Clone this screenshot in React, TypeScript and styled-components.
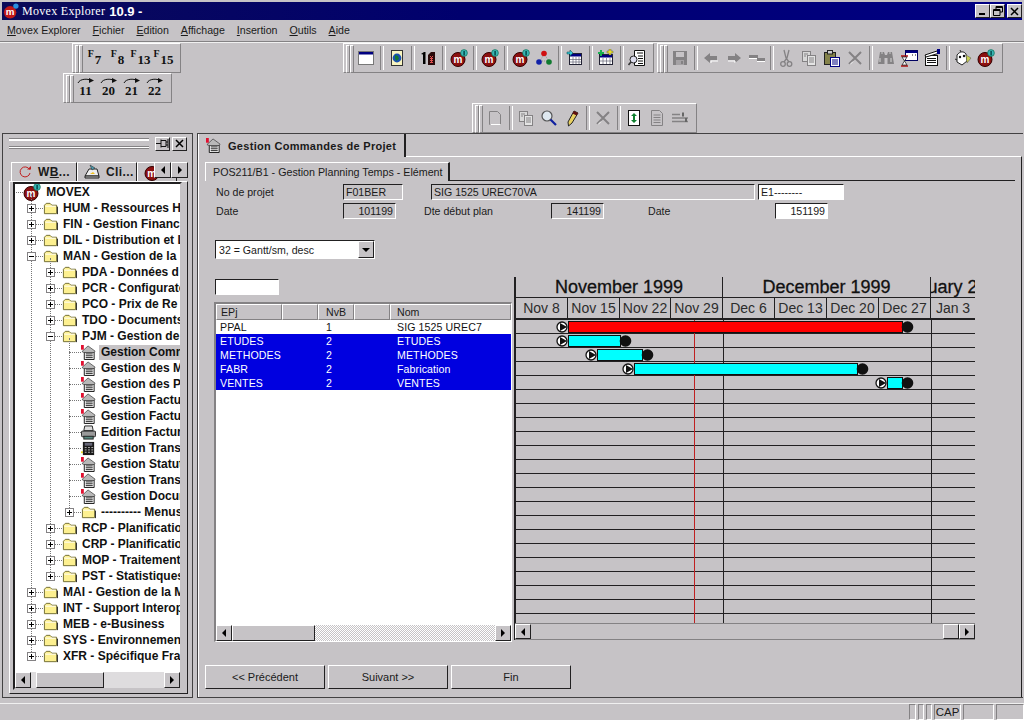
import React from 'react';
import styled, { createGlobalStyle } from 'styled-components';

const FACE = '#c6c3c6';
const SHADOW = '#848284';
const DARK = '#212021';

const GlobalStyle = createGlobalStyle`
    html, body { margin: 0; padding: 0; background: ${FACE}; }
    * { box-sizing: border-box; }
    body { font-family: "Liberation Sans", Arial, sans-serif; font-size: 11px; color: #1a1a1a; }
`;

const Screen = styled.div`
    width: 1024px;
    height: 720px;
    overflow: hidden;
    background: ${FACE};
    padding-top: 2px;
    display: flex;
    flex-direction: column;
`;

/* ---------- title and menu ---------- */

const TitleBar = styled.div`
    height: 18px;
    margin: 0 2px;
    padding-left: 1px;
    display: flex;
    align-items: center;
    background: linear-gradient(90deg, #0a0a58 0%, #00006e 45%, #000084 100%);
    color: #fff;
`;
const TitleName = styled.span`
    font-family: "Liberation Serif", serif;
    font-size: 12px;
    letter-spacing: 0.3px;
    margin-left: 3px;
`;
const TitleVersion = styled.span`
    font-size: 13px;
    font-weight: 700;
    margin-left: 4px;
`;
const WindowButtons = styled.div`
    margin-left: auto;
    display: flex;
    padding-right: 0;
`;
const WindowButton = styled.div<{ $gap?: number }>`
    width: 15px;
    height: 14px;
    margin-left: ${(p) => p.$gap ?? 0}px;
    background: ${FACE};
    border: 1px solid;
    border-color: #fff ${DARK} ${DARK} #fff;
    display: flex;
    align-items: center;
    justify-content: center;
`;
const MenuBar = styled.div`
    height: 22px;
    display: flex;
    align-items: center;
    padding: 0 0 2px 7px;
    gap: 12px;
    font-size: 10.6px;
    border-bottom: 1px solid ${SHADOW};
    u { text-decoration: underline; }
`;

/* ---------- toolbars ---------- */

const Dock = styled.div`
    height: 91px;
    border-top: 1px solid #f0f0f0;
    display: flex;
    flex-direction: column;
`;
const DockRow = styled.div<{ $height: number }>`
    height: ${(p) => p.$height}px;
    display: flex;
`;
const Toolbar = styled.div<{ $left: number }>`
    margin-left: ${(p) => p.$left}px;
    height: 30px;
    display: flex;
    align-items: center;
    padding: 0 5px 0 2px;
    border: 1px solid;
    border-color: #fff ${SHADOW} ${SHADOW} #fff;
`;
const Grip = styled.div`
    width: 8px;
    height: 26px;
    flex: none;
    display: flex;
    &::before, &::after {
        content: '';
        width: 3px;
        height: 100%;
        background: ${FACE};
        border: 1px solid;
        border-color: #fff ${SHADOW} ${SHADOW} #fff;
    }
`;
const Cell = styled.div`
    width: 23px;
    height: 24px;
    flex: none;
    display: flex;
    align-items: center;
    justify-content: center;
`;
const Sep = styled.div<{ $w?: number }>`
    width: ${(p) => p.$w ?? 8}px;
    height: 24px;
    flex: none;
    display: flex;
    justify-content: center;
    padding-left: 2px;
    &::before {
        content: '';
        width: 2px;
        height: 100%;
        border-left: 1px solid ${SHADOW};
        border-right: 1px solid #fff;
    }
`;
const FKey = styled.div`
    width: 23px;
    height: 20px;
    flex: none;
    display: flex;
    justify-content: center;
    font-family: "Liberation Serif", serif;
    font-weight: 700;
    color: #111;
`;
const FLetter = styled.span`
    font-size: 10px;
    line-height: 11px;
`;
const FNumber = styled.span`
    font-size: 13px;
    line-height: 14px;
    margin-top: 5px;
    margin-left: 1px;
`;
const JumpKey = styled.div`
    width: 23px;
    height: 22px;
    flex: none;
    display: flex;
    flex-direction: column;
    align-items: center;
    font-family: "Liberation Serif", serif;
    font-weight: 700;
    font-size: 13px;
    line-height: 13px;
    color: #111;
`;

/* ---------- workspace ---------- */

const Main = styled.div`
    flex: 1;
    display: flex;
    padding-left: 2px;
`;
const LeftPanel = styled.div`
    width: 191px;
    height: 565px;
    border: 1px solid #424142;
    display: flex;
    flex-direction: column;
    padding: 2px 4px 0 6px;
`;
const PanelHead = styled.div`
    height: 15px;
    display: flex;
    align-items: center;
`;
const PanelGrip = styled.div`
    width: 140px;
    height: 11px;
    border-top: 1px solid ${SHADOW};
    border-bottom: 1px solid ${SHADOW};
    background: linear-gradient(#fff 0 2px, ${FACE} 2px 7px, ${SHADOW} 7px 8px, #fff 8px);
`;
const SmallButton = styled.div<{ $left?: number; $h?: number }>`
    width: ${(p) => (p.$h ? 17 : 15)}px;
    height: ${(p) => p.$h ?? 14}px;
    margin-left: ${(p) => p.$left ?? 0}px;
    flex: none;
    background: ${FACE};
    border: 1px solid;
    border-color: #fff ${DARK} ${DARK} #fff;
    display: flex;
    align-items: center;
    justify-content: center;
`;
const TabStrip = styled.div`
    position: relative;
    height: 20px;
    margin-top: 10px;
    padding-left: 2px;
    display: flex;
    align-items: flex-end;
    overflow: hidden;
`;
const SideTab = styled.div<{ $w: number }>`
    width: ${(p) => p.$w}px;
    height: 19px;
    flex: none;
    display: flex;
    align-items: center;
    gap: 6px;
    padding-left: 6px;
    font-size: 12px;
    font-weight: 700;
    letter-spacing: 0.4px;
    white-space: nowrap;
    overflow: hidden;
    border: 1px solid;
    border-bottom: none;
    border-color: #fff ${DARK} transparent #fff;
`;
const TabArrows = styled.div`
    position: absolute;
    right: 0;
    top: 1px;
    display: flex;
`;
const SidePage = styled.div`
    width: 179px;
    height: 513px;
    border: 1px solid;
    border-color: #fff ${DARK} ${DARK} #fff;
    padding: 0 5px 0 3px;
    display: flex;
`;
const TreeBox = styled.div`
    width: 169px;
    height: 508px;
    display: flex;
    flex-direction: column;
    background: #fff;
    border: 2px solid;
    border-color: ${DARK} ${FACE} ${FACE} ${DARK};
`;
const TreeScroll = styled.div`
    flex: 1;
    overflow: hidden;
`;
const Row = styled.div`
    height: 16px;
    display: flex;
    align-items: center;
    white-space: nowrap;
    font-size: 12px;
    font-weight: 700;
    color: #111;
`;
const RootRow = styled(Row)`
    padding-left: 1px;
`;
const Group = styled.div<{ $left: number }>`
    position: relative;
    margin-left: ${(p) => p.$left}px;
    &::before {
        content: '';
        position: absolute;
        left: 0;
        top: -6px;
        bottom: 8px;
        border-left: 1px dotted #777;
    }
`;
const Expander = styled.div`
    position: relative;
    width: 9px;
    height: 9px;
    flex: none;
    margin-left: -4px;
    background: #fff;
    border: 1px solid ${SHADOW};
    &::before {
        content: '';
        position: absolute;
        left: 1px;
        top: 3px;
        width: 5px;
        height: 1px;
        background: #000;
    }
`;
const Plus = styled(Expander)`
    &::after {
        content: '';
        position: absolute;
        left: 3px;
        top: 1px;
        width: 1px;
        height: 5px;
        background: #000;
    }
`;
const Connector = styled.div<{ $w: number }>`
    width: ${(p) => p.$w}px;
    flex: none;
    border-top: 1px dotted #777;
`;
const RowIcon = styled.div`
    width: 15px;
    height: 15px;
    flex: none;
    margin-right: 3px;
    display: flex;
    align-items: center;
`;
const RowLabel = styled.span<{ $selected?: boolean }>`
    flex: 1;
    min-width: 0;
    overflow: hidden;
    padding: 0 2px;
    height: 15px;
    line-height: 15px;
    background: ${(p) => (p.$selected ? FACE : 'transparent')};
`;

const ScrollBar = styled.div<{ $track?: string }>`
    height: 16px;
    flex: none;
    display: flex;
    align-items: stretch;
    background: ${(p) => p.$track ?? FACE};
`;
const DitherTrack = 'repeating-conic-gradient(#fff 0 25%, #c6c3c6 0 50%) 0 0 / 2px 2px';
const ScrollButton = styled.div<{ $w?: number }>`
    width: ${(p) => p.$w ?? 16}px;
    flex: none;
    background: ${FACE};
    border: 1px solid;
    border-color: #fff ${DARK} ${DARK} #fff;
    display: flex;
    align-items: center;
    justify-content: center;
`;
const ScrollThumb = styled.div<{ $w: number; $left?: number }>`
    width: ${(p) => p.$w}px;
    margin-left: ${(p) => p.$left ?? 0}px;
    flex: none;
    background: ${FACE};
    border: 1px solid;
    border-color: #fff ${DARK} ${DARK} #fff;
`;
const Arrow = styled.span<{ $dir: 'left' | 'right' | 'down' }>`
    width: 0;
    height: 0;
    border-style: solid;
    border-color: transparent;
    ${(p) => p.$dir === 'left' && 'border-width: 4px 4px 4px 0; border-right-color: #000;'}
    ${(p) => p.$dir === 'right' && 'border-width: 4px 0 4px 4px; border-left-color: #000;'}
    ${(p) => p.$dir === 'down' && 'border-width: 4px 4px 0 4px; border-top-color: #000;'}
`;
const Spacer = styled.div`
    flex: 1;
`;

/* ---------- right panel ---------- */

const RightPanel = styled.div`
    width: 826px;
    height: 565px;
    margin-left: 4px;
    border: 1px solid #424142;
    border-right: none;
    display: flex;
    flex-direction: column;
`;
const OuterTabs = styled.div`
    height: 22px;
    flex: none;
`;
const OuterTab = styled.div`
    width: 208px;
    height: 23px;
    position: relative;
    z-index: 1;
    background: ${FACE};
    display: flex;
    align-items: center;
    padding-left: 7px;
    gap: 7px;
    font-size: 11px;
    font-weight: 700;
    letter-spacing: 0.3px;
    white-space: nowrap;
    border-left: 1px solid #fff;
    border-right: 2px solid ${DARK};
`;
const Page = styled.div`
    flex: 1;
    border-top: 1px solid #fff;
    border-left: 1px solid #fff;
    border-right: 1px solid ${DARK};
    margin-right: 1px;
    padding: 5px 6px 0 6px;
    display: flex;
    flex-direction: column;
`;
const InnerTabs = styled.div`
    height: 19px;
    flex: none;
    border-bottom: 1px solid ${DARK};
`;
const InnerTab = styled.div`
    width: 245px;
    height: 19px;
    background: ${FACE};
    display: flex;
    align-items: center;
    padding-left: 7px;
    font-size: 10.7px;
    white-space: nowrap;
    border-top: 1px solid #fff;
    border-left: 1px solid #fff;
    border-right: 2px solid ${DARK};
`;
const FormRow = styled.div<{ $top: number }>`
    margin-top: ${(p) => p.$top}px;
    padding-left: 11px;
    height: 16px;
    display: flex;
    align-items: center;
    flex: none;
`;
const Label = styled.div<{ $w: number; $left?: number }>`
    width: ${(p) => p.$w}px;
    margin-left: ${(p) => p.$left ?? 0}px;
    flex: none;
    font-size: 10.6px;
`;
const Field = styled.div<{ $w: number; $left?: number; $white?: boolean; $right?: boolean }>`
    width: ${(p) => p.$w}px;
    height: 16px;
    margin-left: ${(p) => p.$left ?? 0}px;
    flex: none;
    padding: 0 2px;
    display: flex;
    align-items: center;
    justify-content: ${(p) => (p.$right ? 'flex-end' : 'flex-start')};
    font-size: 10.6px;
    white-space: nowrap;
    overflow: hidden;
    background: ${(p) => (p.$white ? '#fff' : FACE)};
    border: 1px solid;
    border-color: ${DARK} #fff #fff ${DARK};
`;
const Combo = styled.div`
    width: 160px;
    height: 19px;
    margin: 21px 0 0 10px;
    flex: none;
    display: flex;
    align-items: center;
    background: #fff;
    padding-left: 3px;
    font-size: 10.6px;
    border: 1px solid;
    border-color: ${DARK} #fff #fff ${DARK};
`;
const ComboButton = styled.div`
    margin-left: auto;
    width: 16px;
    height: 17px;
    background: ${FACE};
    border: 1px solid;
    border-color: #fff ${DARK} ${DARK} #fff;
    display: flex;
    align-items: center;
    justify-content: center;
`;
const Workspace = styled.div`
    margin: 18px 0 0 9px;
    height: 365px;
    flex: none;
    display: flex;
`;
const ListColumn = styled.div`
    width: 298px;
    flex: none;
    padding-top: 2px;
`;
const SearchInput = styled.div`
    width: 64px;
    height: 16px;
    margin-left: 1px;
    background: #fff;
    border: 1px solid;
    border-color: ${DARK} #fff #fff ${DARK};
`;
const Table = styled.div`
    margin-top: 7px;
    height: 340px;
    background: #fff;
    display: flex;
    flex-direction: column;
    border-style: solid;
    border-width: 2px 1px 1px 2px;
    border-color: ${SHADOW} #fff #fff ${SHADOW};
`;
const HeaderRow = styled.div`
    height: 16px;
    flex: none;
    display: flex;
    background: ${FACE};
`;
const HeaderCell = styled.div<{ $w: number; $pad: number }>`
    width: ${(p) => p.$w}px;
    padding-left: ${(p) => p.$pad}px;
    flex: none;
    font-size: 10.6px;
    line-height: 15px;
    border: 1px solid;
    border-color: #fff ${SHADOW} ${SHADOW} #fff;
`;
const TableBody = styled.div`
    flex: 1;
`;
const TableRow = styled.div<{ $selected?: boolean }>`
    height: 14px;
    display: grid;
    grid-template-columns: 106px 71px 1fr;
    padding-left: 4px;
    align-items: center;
    font-size: 10.6px;
    background: ${(p) => (p.$selected ? '#0000e0' : '#fff')};
    color: ${(p) => (p.$selected ? '#fff' : '#111')};
    letter-spacing: 0.1px;
`;
const Gantt = styled.div`
    width: 461px;
    height: 363px;
    margin-left: 2px;
    flex: none;
    display: flex;
    flex-direction: column;
    border-left: 2px solid ${DARK};
`;
const MonthRow = styled.div`
    height: 21px;
    flex: none;
    display: flex;
    border-bottom: 1px solid ${DARK};
`;
const MonthCell = styled.div<{ $w: number }>`
    width: ${(p) => p.$w}px;
    flex: none;
    display: flex;
    justify-content: center;
    align-items: center;
    overflow: hidden;
    white-space: nowrap;
    font-size: 18px;
    -webkit-text-stroke: 0.3px #111;
    color: #111;
    border-right: 1px solid ${DARK};
    &:last-child { border-right: none; }
`;
const WeekRow = styled.div`
    height: 22px;
    flex: none;
    display: flex;
    border-bottom: 2px solid ${DARK};
`;
const WeekCell = styled.div<{ $w: number }>`
    width: ${(p) => p.$w}px;
    flex: none;
    display: flex;
    justify-content: center;
    align-items: center;
    overflow: hidden;
    white-space: nowrap;
    font-size: 14px;
    color: #2c2c2c;
    border-right: 1px solid ${DARK};
    &:last-child { border-right: none; }
`;
const GanttScroll = styled(ScrollBar)`
    height: 17px;
    margin-left: -1px;
    border-top: 1px solid ${SHADOW};
    border-bottom: 1px solid ${SHADOW};
`;
const NavButtons = styled.div`
    margin-top: 23px;
    display: flex;
    gap: 3px;
    flex: none;
`;
const NavButton = styled.div`
    width: 120px;
    height: 24px;
    display: flex;
    align-items: center;
    justify-content: center;
    font-size: 11px;
    background: ${FACE};
    border: 1px solid;
    border-color: #fff ${DARK} ${DARK} #fff;
`;

/* ---------- status bar ---------- */

const StatusBar = styled.div`
    height: 17px;
    margin-top: 4px;
    flex: none;
    display: flex;
    justify-content: flex-end;
    gap: 2px;
    border-top: 1px solid #f0f0f0;
`;
const StatusPane = styled.div<{ $w: number }>`
    width: ${(p) => p.$w}px;
    flex: none;
    font-size: 11.5px;
    display: flex;
    align-items: center;
    justify-content: center;
    border: 1px solid;
    border-color: ${SHADOW} #fff #fff ${SHADOW};
`;

/* ---------- drawings ---------- */

const Ico = styled.svg.attrs({ viewBox: '0 0 18 18', width: 18, height: 18 })`
    display: block;
    flex: none;
`;
const Small = styled.svg.attrs({ viewBox: '0 0 16 16', width: 15, height: 15 })`
    display: block;
    flex: none;
`;

const MovexBall = () => (
    <Ico>
        <circle cx="8" cy="10.5" r="7" fill="#8c1010" stroke="#300" strokeWidth="1" />
        <text x="8" y="13.5" fontSize="10" fontWeight="700" fill="#fff" textAnchor="middle" fontFamily="Liberation Sans">m</text>
        <circle cx="14" cy="4" r="3.4" fill="#39b5b5" stroke="#064" strokeWidth="0.6" />
        <rect x="13.4" y="2" width="1.4" height="4.4" fill="#044" />
    </Ico>
);
const WindowIcon = () => (
    <Ico>
        <rect x="1.5" y="2.5" width="15" height="13" fill="#fff" stroke="#777" />
        <rect x="2" y="3" width="14" height="2.5" fill="#000080" />
    </Ico>
);
const GlobePage = () => (
    <Ico>
        <rect x="3.5" y="1.5" width="11" height="15" fill="#f8f4c0" stroke="#333" />
        <circle cx="9" cy="9" r="4.4" fill="#1a50b0" />
        <path d="M7 6l3 1 1 3-3 2-1-3z" fill="#157a30" />
    </Ico>
);
const OneChecker = () => (
    <Ico>
        <path d="M2 5l3-2h1.500v12H4V5.500z" fill="#000" />
        <path d="M9 6l3-3h4v13H9z" fill="#2a0a0a" />
        <path d="M11 7h1v1h1V7h1v1h-1v1h1v1h-1v1h1v1h-1v1h1v1h-3v-1h1v-1h-1v-1h1v-1h-1V9h1V8h-1z" fill="#e05050" />
    </Ico>
);
const Molecule = () => (
    <Ico>
        <path d="M9 5L5 12M9 5l5 7M5 12h9" stroke="#888" strokeWidth="0.8" strokeDasharray="1 1" />
        <circle cx="9" cy="4.5" r="2.8" fill="#d01010" />
        <circle cx="4" cy="13" r="2.8" fill="#1020a8" />
        <circle cx="14" cy="13" r="2.8" fill="#107a30" />
    </Ico>
);
const TableIcon = ({ accent }: { accent: string }) => (
    <Ico>
        <rect x="3.5" y="4.5" width="12" height="11" fill="#fff" stroke="#223" />
        <rect x="4" y="5" width="11" height="2.5" fill="#000080" />
        <path d="M7 8v7M10 8v7M13 8v7M4 10.5h11M4 13h11" stroke="#667" strokeWidth="0.7" />
        <path d="M1 3h3V1l3 3-3 3V5H1z" fill={accent} stroke="#044" strokeWidth="0.5" />
    </Ico>
);
const TablePlus = () => (
    <Ico>
        <rect x="2.5" y="5.5" width="13" height="10" fill="#fff" stroke="#223" />
        <rect x="3" y="6" width="12" height="2.5" fill="#000080" />
        <path d="M6 9v6M9.500 9v6M13 9v6M3 12h12" stroke="#667" strokeWidth="0.7" />
        <path d="M3 1h2v2h2v2H5v2H3V5H1V3h2z" fill="#18b050" />
        <path d="M12 0h2v2h2v2h-2v2h-2V4h-2V2h2z" fill="#e8e030" stroke="#443" strokeWidth="0.4" />
    </Ico>
);
const DocSearch = () => (
    <Ico>
        <path d="M6.500 1.500h10v15h-10z" fill="#fff" stroke="#111" />
        <path d="M9 4h6M10 7h5M10 9.500h5M10 12h5M10 14.500h5" stroke="#111" />
        <circle cx="5.500" cy="10.500" r="3.500" fill="#dde" stroke="#222" />
        <path d="M3 13l-2.500 3" stroke="#333" strokeWidth="1.600" />
    </Ico>
);
const SaveGrey = () => (
    <Ico>
        <path d="M2 2h14v14H2z" fill={SHADOW} />
        <rect x="5" y="3" width="8" height="5" fill={FACE} />
        <rect x="5" y="11" width="8" height="5" fill="#a5a2a5" />
        <rect x="10" y="12" width="2" height="3" fill={SHADOW} />
    </Ico>
);
const ArrowLeftGrey = () => (
    <Ico>
        <path d="M2 9l6-5v3h7v4H8v3z" fill={SHADOW} />
        <path d="M9 14v-2h7" stroke="#fff" fill="none" />
    </Ico>
);
const ArrowRightGrey = () => (
    <Ico>
        <path d="M16 9l-6-5v3H3v4h7v3z" fill={SHADOW} />
        <path d="M3 12h7v2" stroke="#fff" fill="none" />
    </Ico>
);
const SwapGrey = () => (
    <Ico>
        <rect x="1" y="6" width="9" height="3" fill={SHADOW} />
        <rect x="9" y="9" width="8" height="3" fill={SHADOW} />
        <path d="M1 9.500h8M9 12.500h8" stroke="#fff" />
    </Ico>
);
const ScissorsGrey = () => (
    <Ico>
        <path d="M7 1l2 8 3 4M12 1l-2 8-3 4" stroke={SHADOW} strokeWidth="1.300" fill="none" />
        <circle cx="6" cy="15" r="2.300" fill="none" stroke={SHADOW} strokeWidth="1.300" />
        <circle cx="12.500" cy="15" r="2.300" fill="none" stroke={SHADOW} strokeWidth="1.300" />
    </Ico>
);
const CopyGrey = () => (
    <Ico>
        <rect x="2.500" y="2.500" width="8" height="10" fill="#d8d8d8" stroke={SHADOW} />
        <rect x="7.500" y="6.500" width="8" height="10" fill="#e4e4e4" stroke={SHADOW} />
        <path d="M9 9h5M9 11h5M9 13h5M4 5h4M4 7h2" stroke={SHADOW} />
    </Ico>
);
const PasteIcon = () => (
    <Ico>
        <rect x="1.500" y="3.500" width="11" height="12" fill="#84824a" stroke="#222" />
        <rect x="4.500" y="1.500" width="5" height="3.500" fill="#ccc" stroke="#222" />
        <rect x="7.500" y="8.500" width="9" height="9" fill="#fff" stroke="#000080" />
        <path d="M9 11h6M9 13h6M9 15h6" stroke="#000080" />
    </Ico>
);
const CrossGrey = () => (
    <Ico>
        <path d="M3 3l12 12M15 3L3 15" stroke={SHADOW} strokeWidth="2" />
        <path d="M4 15.500l3-3" stroke="#fff" />
    </Ico>
);
const BinocularsGrey = () => (
    <Ico>
        <path d="M3 3h4l1 3h2l1-3h4l2 12h-6.500V9h-3v6H1z" fill={SHADOW} />
        <path d="M4 4h2M12 4h2M3 9v4M14 9v4" stroke="#c8c8c8" strokeWidth="1.200" />
    </Ico>
);
const HourglassWindow = () => (
    <Ico>
        <rect x="5.500" y="1.500" width="12" height="10" fill="#fff" stroke="#000060" />
        <rect x="6" y="2" width="11" height="2" fill="#000080" />
        <path d="M12 6h1M15 6h1" stroke="#111" />
        <path d="M1 7h7M1 17h7" stroke="#b01010" strokeWidth="1.500" />
        <path d="M2 8l2.500 4L2 16h5l-2.500-4L7 8z" fill="#fff" stroke="#111" strokeWidth="0.700" />
    </Ico>
);
const ClapperDoc = () => (
    <Ico>
        <rect x="2.500" y="6.500" width="12" height="10" fill="#fff" stroke="#111" />
        <path d="M2 6l12-4 1 2.500L3 8z" fill="#fff" stroke="#111" />
        <path d="M4 9.500h9M4 11.500h9M4 13.500h9" stroke="#111" />
        <rect x="14" y="0" width="3" height="5" fill="#000080" />
    </Ico>
);
const Wizard = () => (
    <Ico>
        <path d="M3 6c3-4 7-4 9-1l1 7-5 4-5-3z" fill="#fff" stroke="#222" />
        <circle cx="6" cy="8" r="1.200" fill="#111" />
        <circle cx="10" cy="7" r="1.200" fill="#111" />
        <path d="M12 6l5 3-4 5z" fill="#c8d050" stroke="#555" strokeWidth="0.500" />
        <path d="M6 1l1 2M1 10l2 1" stroke="#222" />
    </Ico>
);
const BlankDocGrey = () => (
    <Ico>
        <path d="M3.500 2.500h8l3 3v10h-11z" fill={FACE} stroke={SHADOW} />
        <path d="M4.500 15.500h10" stroke="#fff" />
    </Ico>
);
const Magnifier = () => (
    <Ico>
        <circle cx="7" cy="7" r="5" fill="#dfe8f0" stroke="#555" strokeWidth="1.200" />
        <path d="M10.500 10.500L16 16" stroke="#1020a0" strokeWidth="2.200" />
    </Ico>
);
const Pencil = () => (
    <Ico>
        <path d="M11 2l4 2-6 10-3.500 3-.5-4z" fill="#e8d060" stroke="#222" />
        <path d="M11 2l4 2-1.500 2.500-4-2z" fill="#601010" />
    </Ico>
);
const DocRefresh = () => (
    <Ico>
        <rect x="3.500" y="1.500" width="11" height="15" fill="#fff" stroke="#111" />
        <path d="M6 7l3-3 3 3H10v2H8V7zM12 11l-3 3-3-3h2V9h2v2z" fill="#108030" />
    </Ico>
);
const DocLinesGrey = () => (
    <Ico>
        <path d="M3.500 1.500h8l3 3v12h-11z" fill={FACE} stroke={SHADOW} />
        <path d="M5.500 6h7M5.500 8.500h7M5.500 11h7M5.500 13.500h7" stroke={SHADOW} />
    </Ico>
);
const AlignGrey = () => (
    <Ico>
        <path d="M1 5.500h8M1 9h16M1 12.500h16" stroke={SHADOW} strokeWidth="1.600" />
        <path d="M12 3.500v4M15 9v4" stroke="#666" strokeWidth="2" />
    </Ico>
);
const JumpArc = () => (
    <svg viewBox="0 0 18 7" width="18" height="7" style={{ display: 'block' }}>
        <path d="M1 6C3 1.500 11 1.500 14 3.500" fill="none" stroke="#111" />
        <path d="M12 1l5 2.500-5 2.500z" fill="#111" />
    </svg>
);
const Folder = () => (
    <Small>
        <path d="M1.500 4.500l2-2h4l2 2h5v9h-13z" fill="#fdf090" stroke="#6e6a30" />
        <path d="M2.500 5.500h11" stroke="#fff" />
        <path d="M15.500 6v8" stroke="#222" />
    </Small>
);
const ProgramIcon = () => (
    <Small>
        <path d="M3.500 7.500h10.500v8H3.500z" fill="#fff" stroke="#111" />
        <path d="M1 7l6.500-6L15 6.500 14 8H3z" fill="#b8b8b8" stroke="#333" strokeWidth="0.700" />
        <rect x="0" y="0" width="3" height="5" fill="#e01030" />
        <path d="M5 9.500h7.500M5 11.500h7.500M5 13.500h7.500" stroke="#111" />
    </Small>
);
const PrinterIcon = () => (
    <Small>
        <path d="M4 1h8l1 5H3z" fill="#ddd" stroke="#222" />
        <rect x="0.500" y="6.500" width="15" height="6" rx="1" fill="#9a9a9a" stroke="#222" />
        <rect x="3" y="12" width="10" height="3" fill="#5a8a80" stroke="#222" />
    </Small>
);
const CalcIcon = () => (
    <Small>
        <rect x="0" y="11" width="2" height="2" fill="#f0e020" />
        <rect x="2" y="1" width="12" height="14" fill="#1a1a1a" />
        <rect x="4" y="2" width="8" height="3" fill="#667" />
        <path d="M4 7h2M7.500 7h2M11 7h2M4 9.500h2M7.500 9.500h2M11 9.500h2M4 12h2M7.500 12h2M11 12h2" stroke="#bbb" />
    </Small>
);
const AppLogo = () => (
    <svg viewBox="0 0 18 18" width="16" height="16">
        <circle cx="8" cy="10.500" r="7" fill="#c01818" />
        <text x="8" y="14" fontSize="11" fontWeight="700" fill="#fff" textAnchor="middle" fontFamily="Liberation Sans">m</text>
        <circle cx="14.500" cy="3.500" r="3" fill="#2a90e0" />
    </svg>
);
const RefreshTab = () => (
    <svg viewBox="0 0 14 14" width="14" height="14">
        <path d="M11.500 4.500A5 5 0 1 0 12 8" fill="none" stroke="#c02020" strokeWidth="1" />
        <path d="M9 4.500h4V1z" fill="#c02020" />
    </svg>
);
const ClientTab = () => (
    <svg viewBox="0 0 16 16" width="16" height="16">
        <path d="M1 12l4-7h8l2 7z" fill="#eee" stroke="#222" />
        <path d="M1 12h14v2H1z" fill="#bbb" stroke="#222" />
        <path d="M6 1l5 3-3 2z" fill="#4a9ab0" stroke="#222" strokeWidth="0.500" />
        <path d="M6 10l3-2 2 2z" fill="#f0c020" />
    </svg>
);
const PinIcon = () => (
    <svg viewBox="0 0 13 11" width="13" height="11">
        <path d="M0 5.500h5M5 1.500v8M5 2.500h5v6H5M10 4h2M10 7h2M12 1v9" stroke="#111" fill="none" />
    </svg>
);
const CloseGlyph = ({ size = 9 }: { size?: number }) => (
    <svg viewBox="0 0 9 9" width={size} height={size}>
        <path d="M1 1l7 7M8 1L1 8" stroke="#000" strokeWidth="1.500" />
    </svg>
);
const RestoreGlyph = () => (
    <svg viewBox="0 0 10 10" width="10" height="10">
        <path d="M3 .500h6.500V6H7M3 .500V3M3 1.500h6.500" stroke="#000" fill="none" />
        <path d="M.500 3.500H7v6H.500zM.500 4.500H7" stroke="#000" fill="none" />
    </svg>
);
const MinGlyph = () => (
    <svg viewBox="0 0 10 10" width="10" height="10">
        <rect x="1" y="7" width="6" height="2" fill="#000" />
    </svg>
);

/* ---------- gantt data ---------- */

const ROW_H = 14;
const CHART_W = 459;
const CHART_H = 303;
const GANTT_X = 516;
const gridLines = Array.from({ length: 22 }, (_, i) => i * ROW_H + ROW_H);
const bars = [
    { from: 568, to: 902, fill: '#ff0000' },
    { from: 568, to: 620, fill: '#00ffff' },
    { from: 597, to: 642, fill: '#00ffff' },
    { from: 634, to: 857, fill: '#00ffff' },
    { from: 887, to: 902, fill: '#00ffff' },
];

const GanttChart = () => (
    <svg width={CHART_W} height={CHART_H} viewBox={`0 0 ${CHART_W} ${CHART_H}`} style={{ display: 'block' }}>
        {gridLines.map((y) => (
            <line key={y} x1="0" x2={CHART_W} y1={y - 0.5} y2={y - 0.5} stroke={DARK} />
        ))}
        <line x1="207.500" x2="207.500" y1="0" y2={CHART_H} stroke={DARK} />
        <line x1="415.500" x2="415.500" y1="0" y2={CHART_H} stroke={DARK} />
        <line x1="178.500" x2="178.500" y1="0" y2={CHART_H} stroke="#c02020" />
        {bars.map((b, i) => {
            const y = i * ROW_H;
            const x0 = b.from - GANTT_X;
            const x1 = b.to - GANTT_X;
            return (
                <g key={i}>
                    <rect x={x0 + 0.5} y={y + 1.5} width={x1 - x0} height={11} fill={b.fill} stroke="#111" />
                    <circle cx={x0 - 6} cy={y + 7} r="5" fill="#fff" stroke="#111" strokeWidth="1.300" />
                    <path d={`M${x0 - 8} ${y + 3}l7 4-7 4z`} fill="#111" />
                    <circle cx={x1 + 5.500} cy={y + 7} r="5.800" fill="#111" />
                </g>
            );
        })}
    </svg>
);

const weeks = ['Nov 8', 'Nov 15', 'Nov 22', 'Nov 29', 'Dec 6', 'Dec 13', 'Dec 20', 'Dec 27', 'Jan 3'];
const weekWidths = [52, 52, 51, 52, 52, 52, 52, 52, 44];

const tableRows = [
    { code: 'PPAL', level: '1', name: 'SIG 1525 UREC7', selected: false },
    { code: 'ETUDES', level: '2', name: 'ETUDES', selected: true },
    { code: 'METHODES', level: '2', name: 'METHODES', selected: true },
    { code: 'FABR', level: '2', name: 'Fabrication', selected: true },
    { code: 'VENTES', level: '2', name: 'VENTES', selected: true },
];

/* ---------- tree ---------- */

const FolderRow = ({ label, open }: { label: string; open?: boolean }) => (
    <Row>
        {open ? <Expander /> : <Plus />}
        <Connector $w={7} />
        <RowIcon><Folder /></RowIcon>
        <RowLabel>{label}</RowLabel>
    </Row>
);
const LeafRow = ({ label, icon, selected }: { label: string; icon?: React.ReactNode; selected?: boolean }) => (
    <Row>
        <Connector $w={12} />
        <RowIcon>{icon ?? <ProgramIcon />}</RowIcon>
        <RowLabel $selected={selected}>{label}</RowLabel>
    </Row>
);

const Tree = () => (
    <TreeScroll>
        <RootRow>
            <Connector $w={7} />
            <RowIcon><MovexBall /></RowIcon>
            <RowLabel>&nbsp;MOVEX</RowLabel>
        </RootRow>
        <Group $left={16}>
            <FolderRow label="HUM - Ressources H" />
            <FolderRow label="FIN - Gestion Financ" />
            <FolderRow label="DIL - Distribution et L" />
            <FolderRow label="MAN - Gestion de la" open />
            <Group $left={19}>
                <FolderRow label="PDA - Données d" />
                <FolderRow label="PCR - Configurate" />
                <FolderRow label="PCO - Prix de Re" />
                <FolderRow label="TDO - Documents" />
                <FolderRow label="PJM - Gestion de" open />
                <Group $left={19}>
                    <LeafRow label="Gestion Comm" selected />
                    <LeafRow label="Gestion des M" />
                    <LeafRow label="Gestion des P" />
                    <LeafRow label="Gestion Factu" />
                    <LeafRow label="Gestion Factu" />
                    <LeafRow label="Edition Factur" icon={<PrinterIcon />} />
                    <LeafRow label="Gestion Trans" icon={<CalcIcon />} />
                    <LeafRow label="Gestion Statut" />
                    <LeafRow label="Gestion Trans" />
                    <LeafRow label="Gestion Docum" />
                    <FolderRow label="---------- Menus" />
                </Group>
                <FolderRow label="RCP - Planificatio" />
                <FolderRow label="CRP - Planificatio" />
                <FolderRow label="MOP - Traitement" />
                <FolderRow label="PST - Statistiques" />
            </Group>
            <FolderRow label="MAI - Gestion de la M" />
            <FolderRow label="INT - Support Interop" />
            <FolderRow label="MEB - e-Business" />
            <FolderRow label="SYS - Environnement" />
            <FolderRow label="XFR - Spécifique Fra" />
        </Group>
    </TreeScroll>
);

const App = () => (
    <Screen>
        <GlobalStyle />
        <TitleBar>
            <AppLogo />
            <TitleName>Movex Explorer</TitleName>
            <TitleVersion>10.9 -</TitleVersion>
            <WindowButtons>
                <WindowButton><MinGlyph /></WindowButton>
                <WindowButton><RestoreGlyph /></WindowButton>
                <WindowButton $gap={2}><CloseGlyph /></WindowButton>
            </WindowButtons>
        </TitleBar>
        <MenuBar>
            <span><u>M</u>ovex Explorer</span>
            <span><u>F</u>ichier</span>
            <span><u>E</u>dition</span>
            <span><u>A</u>ffichage</span>
            <span><u>I</u>nsertion</span>
            <span><u>O</u>utils</span>
            <span><u>A</u>ide</span>
        </MenuBar>
        <Dock>
            <DockRow $height={31}>
                <Toolbar $left={72}>
                    <Grip />
                    {['7', '8', '13', '15'].map((n) => (
                        <FKey key={n}><FLetter>F</FLetter><FNumber>{n}</FNumber></FKey>
                    ))}
                </Toolbar>
                <Toolbar $left={162}>
                    <Grip />
                    <Cell><WindowIcon /></Cell><Sep />
                    <Cell><GlobePage /></Cell><Sep />
                    <Cell><OneChecker /></Cell><Sep />
                    <Cell><MovexBall /></Cell><Sep />
                    <Cell><MovexBall /></Cell><Sep />
                    <Cell><MovexBall /></Cell>
                    <Cell><Molecule /></Cell><Sep />
                    <Cell><TableIcon accent="#38c8d8" /></Cell><Sep />
                    <Cell><TablePlus /></Cell><Sep />
                    <Cell><DocSearch /></Cell>
                </Toolbar>
                <Toolbar $left={3}>
                    <Grip />
                    <Cell><SaveGrey /></Cell><Sep />
                    <Cell><ArrowLeftGrey /></Cell>
                    <Cell><ArrowRightGrey /></Cell>
                    <Cell><SwapGrey /></Cell><Sep $w={6} />
                    <Cell><ScissorsGrey /></Cell>
                    <Cell><CopyGrey /></Cell>
                    <Cell><PasteIcon /></Cell>
                    <Cell><CrossGrey /></Cell><Sep />
                    <Cell><BinocularsGrey /></Cell>
                    <Cell><HourglassWindow /></Cell>
                    <Cell><ClapperDoc /></Cell><Sep />
                    <Cell><Wizard /></Cell>
                    <Cell><MovexBall /></Cell>
                </Toolbar>
            </DockRow>
            <DockRow $height={30}>
                <Toolbar $left={63}>
                    <Grip />
                    {['11', '20', '21', '22'].map((n) => (
                        <JumpKey key={n}><JumpArc />{n}</JumpKey>
                    ))}
                </Toolbar>
            </DockRow>
            <DockRow $height={30}>
                <Toolbar $left={472}>
                    <Grip />
                    <Cell><BlankDocGrey /></Cell><Sep />
                    <Cell><CopyGrey /></Cell>
                    <Cell><Magnifier /></Cell>
                    <Cell><Pencil /></Cell><Sep />
                    <Cell><CrossGrey /></Cell><Sep />
                    <Cell><DocRefresh /></Cell>
                    <Cell><DocLinesGrey /></Cell>
                    <Cell><AlignGrey /></Cell>
                </Toolbar>
            </DockRow>
        </Dock>
        <Main>
            <LeftPanel>
                <PanelHead>
                    <PanelGrip />
                    <SmallButton $left={6}><PinIcon /></SmallButton>
                    <SmallButton $left={2}><CloseGlyph /></SmallButton>
                </PanelHead>
                <TabStrip>
                    <SideTab $w={66}><RefreshTab /><span>W<u>B</u>...</span></SideTab>
                    <SideTab $w={60}><ClientTab /><span>Cli...</span></SideTab>
                    <SideTab $w={40}><MovexBall /></SideTab>
                    <TabArrows>
                        <SmallButton $h={16}><Arrow $dir="left" /></SmallButton>
                        <SmallButton $h={16}><Arrow $dir="right" /></SmallButton>
                    </TabArrows>
                </TabStrip>
                <SidePage>
                    <TreeBox>
                        <Tree />
                        <ScrollBar $track="#dedcde">
                            <ScrollButton><Arrow $dir="left" /></ScrollButton>
                            <ScrollThumb $w={68} $left={5} />
                            <Spacer />
                            <ScrollButton><Arrow $dir="right" /></ScrollButton>
                        </ScrollBar>
                    </TreeBox>
                </SidePage>
            </LeftPanel>
            <RightPanel>
                <OuterTabs>
                    <OuterTab><ProgramIcon />Gestion Commandes de Projet</OuterTab>
                </OuterTabs>
                <Page>
                    <InnerTabs>
                        <InnerTab>POS211/B1 - Gestion Planning Temps - Elément</InnerTab>
                    </InnerTabs>
                    <FormRow $top={3}>
                        <Label $w={127}>No de projet</Label>
                        <Field $w={60}>F01BER</Field>
                        <Field $w={324} $left={28}>SIG 1525 UREC70VA</Field>
                        <Field $w={86} $left={3} $white>E1--------</Field>
                    </FormRow>
                    <FormRow $top={3}>
                        <Label $w={127}>Date</Label>
                        <Field $w={53} $right>101199</Field>
                        <Label $w={127} $left={28}>Dte début plan</Label>
                        <Field $w={53} $right>141199</Field>
                        <Label $w={127} $left={44}>Date</Label>
                        <Field $w={53} $right $white>151199</Field>
                    </FormRow>
                    <Combo>
                        32 = Gantt/sm, desc
                        <ComboButton><Arrow $dir="down" /></ComboButton>
                    </Combo>
                    <Workspace>
                        <ListColumn>
                            <SearchInput />
                            <Table>
                                <HeaderRow>
                                    <HeaderCell $w={66} $pad={4}>EPj</HeaderCell>
                                    <HeaderCell $w={36} $pad={0} />
                                    <HeaderCell $w={36} $pad={7}>NvB</HeaderCell>
                                    <HeaderCell $w={36} $pad={0} />
                                    <HeaderCell $w={121} $pad={6}>Nom</HeaderCell>
                                </HeaderRow>
                                <TableBody>
                                    {tableRows.map((r) => (
                                        <TableRow key={r.code} $selected={r.selected}>
                                            <span>{r.code}</span>
                                            <span>{r.level}</span>
                                            <span>{r.name}</span>
                                        </TableRow>
                                    ))}
                                </TableBody>
                                <ScrollBar $track={DitherTrack}>
                                    <ScrollButton><Arrow $dir="left" /></ScrollButton>
                                    <ScrollThumb $w={83} />
                                    <Spacer />
                                    <ScrollButton><Arrow $dir="right" /></ScrollButton>
                                </ScrollBar>
                            </Table>
                        </ListColumn>
                        <Gantt>
                            <MonthRow>
                                <MonthCell $w={207}>November 1999</MonthCell>
                                <MonthCell $w={208}>December 1999</MonthCell>
                                <MonthCell $w={44}>January 2000</MonthCell>
                            </MonthRow>
                            <WeekRow>
                                {weeks.map((w, i) => (
                                    <WeekCell key={w} $w={weekWidths[i]}>{w}</WeekCell>
                                ))}
                            </WeekRow>
                            <GanttChart />
                            <GanttScroll>
                                <ScrollButton><Arrow $dir="left" /></ScrollButton>
                                <Spacer />
                                <ScrollButton />
                                <ScrollButton><Arrow $dir="right" /></ScrollButton>
                            </GanttScroll>
                        </Gantt>
                    </Workspace>
                    <NavButtons>
                        <NavButton>&lt;&lt; Précédent</NavButton>
                        <NavButton>Suivant &gt;&gt;</NavButton>
                        <NavButton>Fin</NavButton>
                    </NavButtons>
                </Page>
            </RightPanel>
        </Main>
        <StatusBar>
            <StatusPane $w={7} />
            <StatusPane $w={6} />
            <StatusPane $w={6} />
            <StatusPane $w={27}>CAP</StatusPane>
            <StatusPane $w={31} />
            <StatusPane $w={28} />
        </StatusBar>
    </Screen>
);

export default App;
